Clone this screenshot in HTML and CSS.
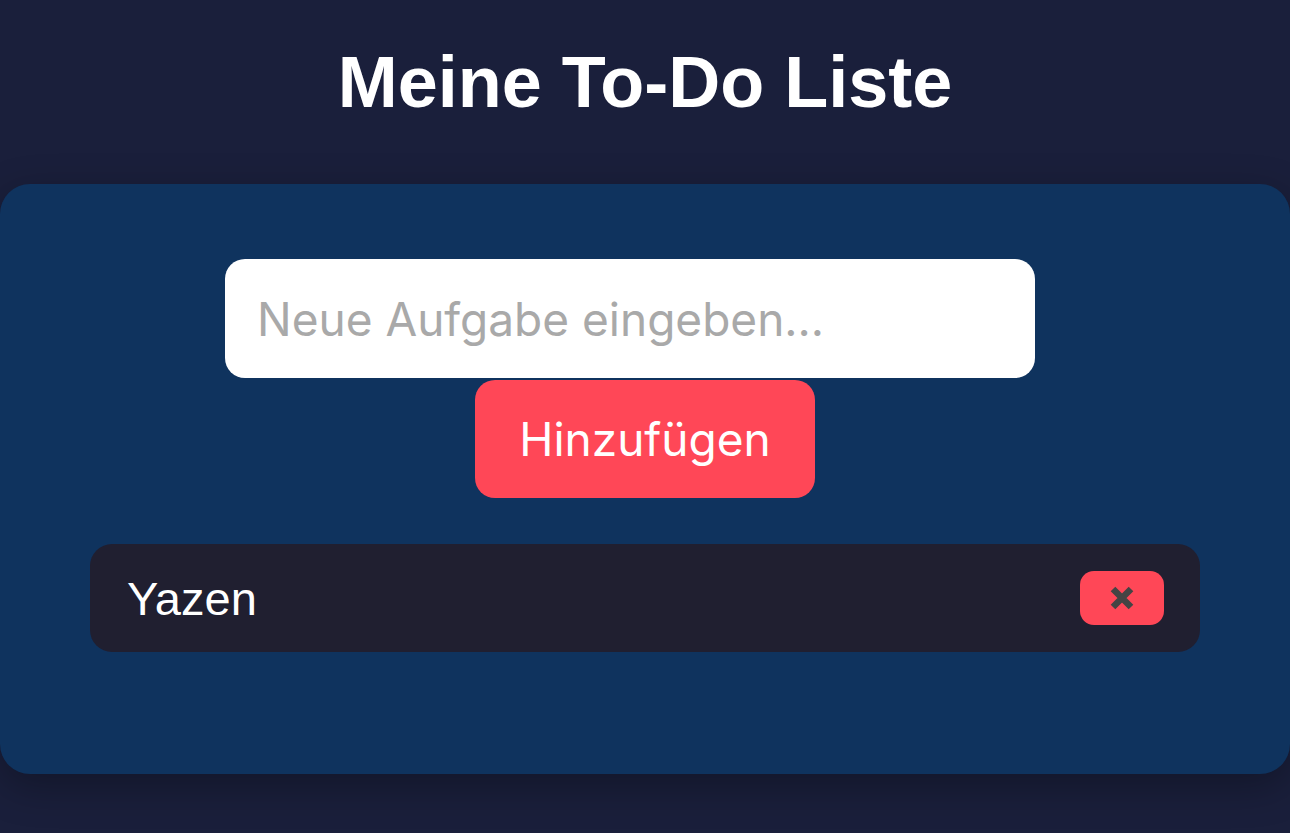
FILE: index.html
```html
<!DOCTYPE html>
<html lang="de">
<head>
<meta charset="utf-8">
<title>Meine To-Do Liste</title>
<link rel="stylesheet" href="styles.css">
</head>
<body>
  <header class="header">
    <h1 class="title">Meine To-Do Liste</h1>
  </header>
  <main class="card">
    <div class="form">
      <input class="task-input" type="text" placeholder="Neue Aufgabe eingeben...">
      <button class="add-btn" type="button">Hinzufügen</button>
    </div>
    <ul class="list">
      <li class="item">
        <span class="item-text">Yazen</span>
        <button class="del-btn" type="button" aria-label="Löschen">
          <svg width="26" height="26" viewBox="0 0 26 26"><path d="M4 4 L22 22 M22 4 L4 22" stroke="#444" stroke-width="6.5" stroke-linecap="butt"/></svg>
        </button>
      </li>
    </ul>
  </main>
</body>
</html>
```
FILE: styles.css
```css
html, body {
  margin: 0;
  padding: 0;
}
body {
  background: #1a1f3b;
  font-family: "Liberation Sans", Arial, sans-serif;
  color: #fff;
  height: 833px;
  overflow: hidden;
}
.header {
  padding-top: 39px;
  height: 184px;
  box-sizing: border-box;
}
.title {
  margin: 0;
  text-align: center;
  font-size: 72px;
  line-height: 1.2;
  font-weight: 700;
  color: #fff;
}
.card {
  background: #0f335e;
  border-radius: 30px;
  height: 590px;
  box-sizing: border-box;
  padding: 75px 90px 0;
  box-shadow: 0 12px 40px rgba(0, 0, 0, 0.3);
}
.form {
  display: flex;
  flex-direction: column;
  align-items: center;
  gap: 2px;
}
.task-input {
  width: 810px;
  height: 119px;
  box-sizing: border-box;
  border: none;
  outline: none;
  border-radius: 20px;
  background: #fff;
  padding: 0 32px;
  margin-right: 30px;
  font-family: Inter, "Noto Sans", sans-serif;
  font-size: 46px;
  color: #222;
}
.task-input::placeholder {
  color: #a9a9a9;
}
.add-btn {
  width: 340px;
  height: 118px;
  border: none;
  border-radius: 20px;
  background: #ff4757;
  color: #fff;
  font-family: Inter, "Noto Sans", sans-serif;
  font-size: 46px;
  padding: 0;
}
.list {
  list-style: none;
  margin: 46px 0 0;
  padding: 0;
}
.item {
  display: flex;
  align-items: center;
  justify-content: space-between;
  height: 108px;
  box-sizing: border-box;
  padding: 0 36px 0 37px;
  background: #201f30;
  border-radius: 22px;
}
.item-text {
  font-size: 47px;
  color: #fff;
}
.del-btn {
  width: 84px;
  height: 54px;
  border: none;
  border-radius: 14px;
  background: #ff4757;
  display: flex;
  align-items: center;
  justify-content: center;
  padding: 0;
}
```
